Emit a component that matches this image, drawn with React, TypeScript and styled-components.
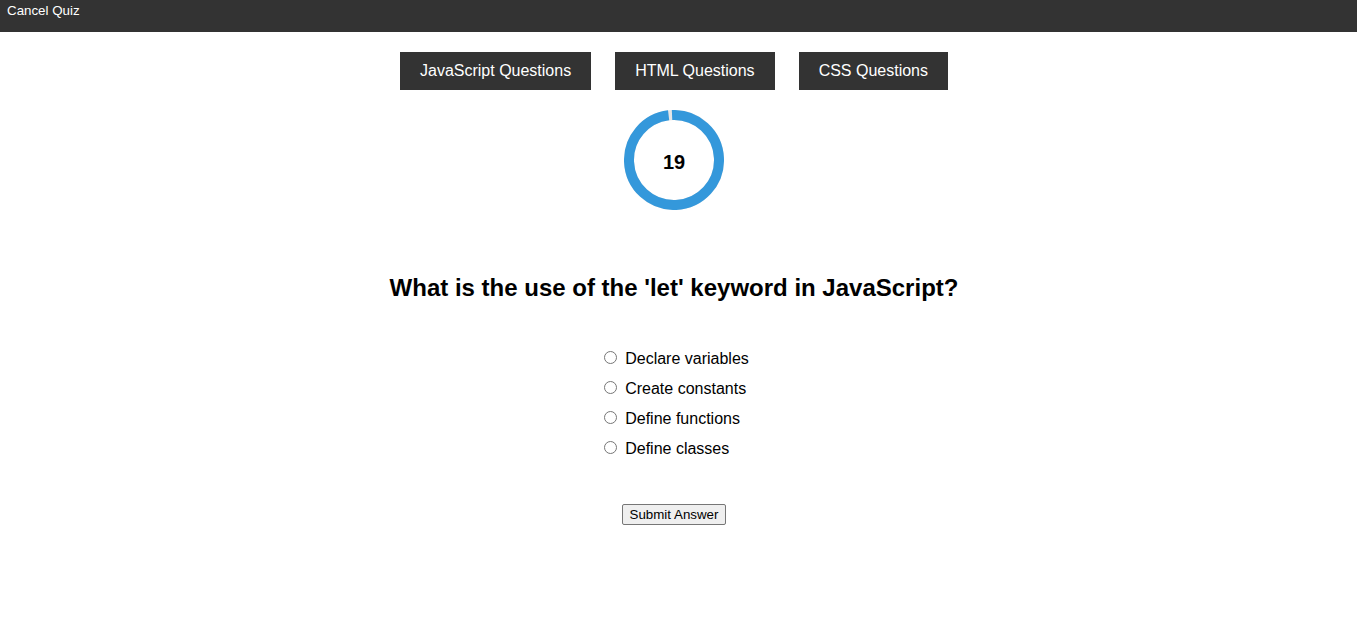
import React from "react";
import styled, { createGlobalStyle } from "styled-components";

const Global = createGlobalStyle`
  html, body { margin: 0; padding: 0; background: #fff; }
  body { font-family: "Liberation Sans", Arial, sans-serif; color: #000; }
`;

const TopBar = styled.div`
  height: 32px;
  background: #333333;
  display: flex;
  align-items: flex-start;
`;

const CancelButton = styled.button`
  background: transparent;
  border: none;
  color: #ffffff;
  font-family: "Liberation Sans", Arial, sans-serif;
  font-size: 13.33px;
  padding: 3px 7px;
  cursor: pointer;
`;

const Main = styled.main`
  display: flex;
  flex-direction: column;
  align-items: center;
  padding-right: 9px;
`;

const TabRow = styled.div`
  display: flex;
  gap: 24px;
  margin-top: 20px;
`;

const TabButton = styled.button`
  background: #333333;
  color: #ffffff;
  border: none;
  font-family: "Liberation Sans", Arial, sans-serif;
  font-size: 16px;
  line-height: 18px;
  padding: 10px 20px;
  cursor: pointer;
`;

const Timer = styled.div`
  position: relative;
  width: 100px;
  height: 100px;
  margin-top: 20px;
`;

const TimerLabel = styled.span`
  position: absolute;
  inset: 0;
  display: flex;
  align-items: center;
  justify-content: center;
  font-size: 20px;
  font-weight: bold;
  padding-top: 5px;
`;

const Question = styled.h2`
  font-size: 24px;
  font-weight: bold;
  margin: 64px 0 0;
  line-height: 28px;
`;

const Options = styled.div`
  display: flex;
  flex-direction: column;
  margin-top: 42px;
  padding-left: 2px;
`;

const OptionRow = styled.label`
  display: flex;
  align-items: center;
  height: 30px;
  font-size: 16px;
`;

const Radio = styled.input`
  margin: 0 8px 3px 3px;
  width: 13px;
  height: 13px;
`;

const Submit = styled.button`
  margin-top: 40px;
  font-family: "Liberation Sans", Arial, sans-serif;
  font-size: 13.33px;
  line-height: 15px;
  padding: 2px 7px;
  background: #efefef;
  border: 1px solid #767676;
  border-radius: 2px;
  color: #000;
`;

const options = ["Declare variables", "Create constants", "Define functions", "Define classes"];

export default function App() {
  const r = 45;
  const c = 2 * Math.PI * r;
  const progress = 0.986;
  return (
    <>
      <Global />
      <TopBar>
        <CancelButton>Cancel Quiz</CancelButton>
      </TopBar>
      <Main>
        <TabRow>
          <TabButton>JavaScript Questions</TabButton>
          <TabButton>HTML Questions</TabButton>
          <TabButton>CSS Questions</TabButton>
        </TabRow>
        <Timer>
          <svg width="100" height="100" viewBox="0 0 100 100">
            <circle cx="50" cy="50" r={r} fill="none" stroke="#e6e6e6" strokeWidth="10" />
            <circle
              cx="50"
              cy="50"
              r={r}
              fill="none"
              stroke="#3498db"
              strokeWidth="10"
              strokeDasharray={`${c * progress} ${c}`}
              transform="rotate(-92.5 50 50)"
            />
          </svg>
          <TimerLabel>19</TimerLabel>
        </Timer>
        <Question>What is the use of the 'let' keyword in JavaScript?</Question>
        <Options>
          {options.map((o) => (
            <OptionRow key={o}>
              <Radio type="radio" name="answer" value={o} />
              {o}
            </OptionRow>
          ))}
        </Options>
        <Submit>Submit Answer</Submit>
      </Main>
    </>
  );
}
